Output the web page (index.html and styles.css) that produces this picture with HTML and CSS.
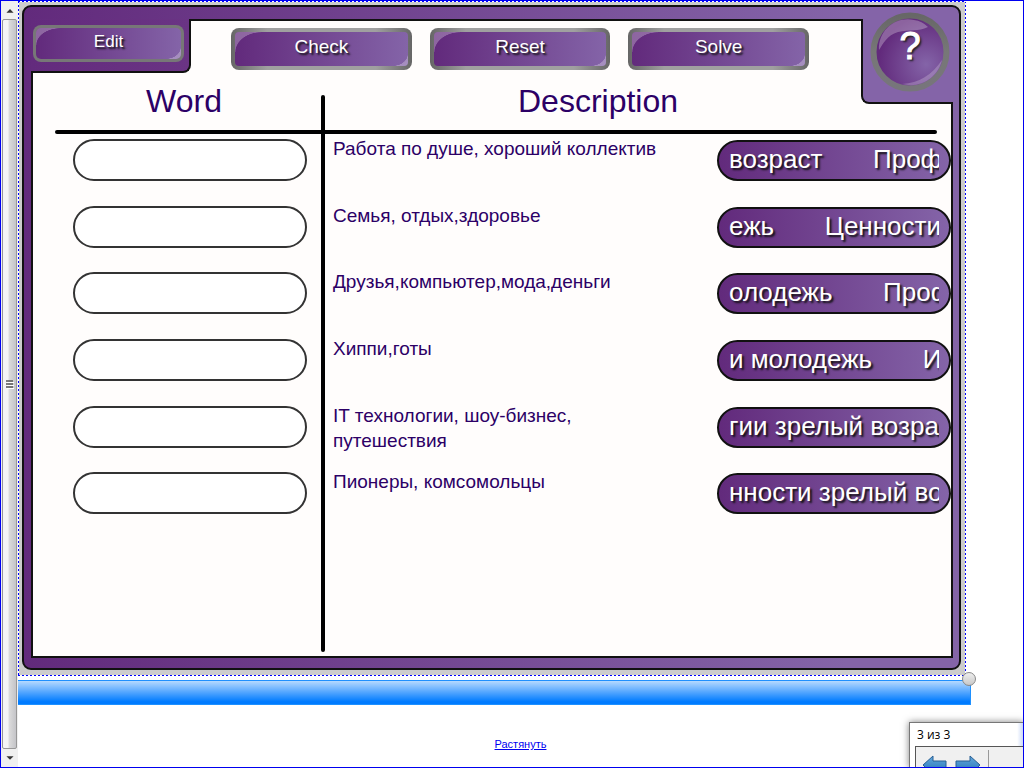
FILE: index.html
```html
<!DOCTYPE html>
<html lang="ru">
<head>
<meta charset="utf-8">
<title>Word / Description</title>
<link rel="stylesheet" href="styles.css">
</head>
<body>
<div class="app">
  <div class="scrollbar" aria-hidden="true">
    <svg class="scroll-arrow" viewBox="0 0 18 18"><path d="M5 12 9 8 13 12Z" fill="#333"/></svg>
    <div class="scroll-thumb"><svg width="8" height="9" viewBox="0 0 8 9"><path d="M0 1h7M0 4h7M0 7h7" stroke="#555" stroke-width="1.500"/><path d="M1 2.500h7M1 5.500h7M1 8.500h7" stroke="#fff" stroke-width="1"/></svg></div>
    <svg class="scroll-arrow" viewBox="0 0 18 18"><path d="M5 7h8L9 11Z" fill="#333"/></svg>
  </div>
  <main class="page">
    <section class="stage">
      <div class="frame">
        <div class="panel">
          <div class="notch-left"><button class="btn btn-edit" type="button">Edit</button></div>
          <div class="toolbar">
            <button class="btn" type="button">Check</button>
            <button class="btn" type="button">Reset</button>
            <button class="btn" type="button">Solve</button>
          </div>
          <div class="notch-right">
            <button class="help" type="button" aria-label="Help">
              <svg viewBox="0 0 80 80" aria-hidden="true">
                <defs>
                  <radialGradient id="orb" cx="0.72" cy="0.67" r="0.65"><stop offset="0" stop-color="#8464a8"/><stop offset="1" stop-color="#622a7c"/></radialGradient>
                  <linearGradient id="ring" x2="0" y2="1"><stop offset="0" stop-color="#676767"/><stop offset="0.5" stop-color="#777"/><stop offset="1" stop-color="#77757b"/></linearGradient>
                </defs>
                <circle cx="40" cy="40" r="36.500" fill="url(#orb)" stroke="url(#ring)" stroke-width="6"/>
                <path d="M9 38C8 18 26 4 44 8Q52 9 58 15C48 20 40 17 28 20C17 23 13 32 9 38Z" fill="#fff" opacity="0.270"/>
                <path d="M72 48C68 65 51 77 32 72C49 71 62 63 72 48Z" fill="#fff" opacity="0.220"/>
              </svg>
              <span class="help-mark">?</span>
            </button>
          </div>
          <div class="board">
            <h2 class="head head-word">Word</h2>
            <h2 class="head head-desc">Description</h2>
            <div class="rule-v"></div>
            <div class="rule-h"></div>
            <div class="rows">
              <div class="row"><input class="slot" type="text" aria-labelledby="d1"><p class="desc" id="d1">Работа по душе, хороший коллектив</p><button class="tile" type="button"><span class="tile-text">возраст       Проф</span></button></div>
              <div class="row"><input class="slot" type="text" aria-labelledby="d2"><p class="desc" id="d2">Семья, отдых,здоровье</p><button class="tile" type="button"><span class="tile-text">ежь       Ценности</span></button></div>
              <div class="row"><input class="slot" type="text" aria-labelledby="d3"><p class="desc" id="d3">Друзья,компьютер,мода,деньги</p><button class="tile" type="button"><span class="tile-text">олодежь       Проф</span></button></div>
              <div class="row"><input class="slot" type="text" aria-labelledby="d4"><p class="desc" id="d4">Хиппи,готы</p><button class="tile" type="button"><span class="tile-text">и молодежь       И</span></button></div>
              <div class="row"><input class="slot" type="text" aria-labelledby="d5"><p class="desc" id="d5">IT технологии, шоу-бизнес, путешествия</p><button class="tile" type="button"><span class="tile-text">гии зрелый возра</span></button></div>
              <div class="row"><input class="slot" type="text" aria-labelledby="d6"><p class="desc" id="d6">Пионеры, комсомольцы</p><button class="tile" type="button"><span class="tile-text">нности зрелый во</span></button></div>
            </div>
          </div>
        </div>
      </div>
      <span class="handle"></span>
    </section>
    <div class="bar"></div>
    <footer class="footer"><a class="stretch" href="#">Растянуть</a></footer>
  </main>
  <aside class="pager">
    <div class="pager-title">3 из 3</div>
    <div class="pager-tools">
      <button class="nav" type="button" aria-label="Назад"><svg width="26" height="22" viewBox="0 0 26 22"><defs><linearGradient id="arrow" x2="0" y2="1"><stop offset="0" stop-color="#62a8dc"/><stop offset="1" stop-color="#1f6fb2"/></linearGradient></defs><path d="M1 10 11 1V6H24V15H11V20Z" fill="url(#arrow)" stroke="#285f93"/></svg></button>
      <button class="nav" type="button" aria-label="Вперёд"><svg width="26" height="22" viewBox="0 0 26 22"><path d="M25 10 15 1V6H1V15H15V20Z" fill="url(#arrow)" stroke="#285f93"/></svg></button>
      <span class="nav-sep"></span>
    </div>
  </aside>
</div>
</body>
</html>
```
FILE: styles.css
```css
* { box-sizing: border-box; }
body {
  margin: 0;
  background: #fff;
  font-family: "Liberation Sans", Arial, sans-serif;
}
button { font-family: inherit; cursor: pointer; }

.app {
  position: relative;
  display: flex;
  height: 100vh;
  min-height: 640px;
  border: 1px solid #0000f0;
  overflow: hidden;
}

/* Scrollbar */
.scrollbar {
  display: flex;
  flex-direction: column;
  flex: none;
  width: 17px;
  padding-left: 1px;
  background: #f0f0f0;
}
.scroll-arrow { width: 16px; height: 18px; }
.scroll-thumb {
  display: flex;
  flex: 1;
  align-items: center;
  width: 15px;
  padding-left: 3px;
  border: 1px solid #979797;
  border-radius: 2px;
  background: linear-gradient(90deg, #f5f5f5 0 40%, #dcdcdc 45%, #c4c4c8);
}

/* Page column */
.page {
  display: flex;
  flex: 1;
  flex-direction: column;
  min-width: 0;
}
.stage {
  position: relative;
  display: flex;
  flex: 1;
  margin-right: 57px;
  padding: 4px 5px 6px 4px;
  background:
    repeating-linear-gradient(90deg, #00f 0 2px, #fff 2px 4px) top / 100% 1px no-repeat,
    repeating-linear-gradient(90deg, #00f 0 2px, #fff 2px 4px) bottom / 100% 1px no-repeat,
    repeating-linear-gradient(#00f 0 2px, #fff 2px 4px) left / 1px 100% no-repeat,
    repeating-linear-gradient(#00f 0 2px, #fff 2px 4px) right / 1px 100% no-repeat,
    #ccc;
}
.frame {
  display: flex;
  flex: 1;
  padding: 12px 6px 10px 7px;
  border: 2px solid #111;
  border-radius: 9px;
  background: linear-gradient(90deg, #622a7c, #8464a8 88%);
}
.panel {
  display: grid;
  flex: 1;
  grid-template-columns: 158px 1fr 90px;
  grid-template-rows: 52px 1fr;
  border: 2px solid #111;
  background: #fffdfc;
}
.notch-left {
  grid-area: 1 / 1;
  margin: -2px 0 0 -2px;
  padding: 6px 0 0 2px;
  border: solid #111;
  border-width: 0 2px 2px 0;
  border-bottom-right-radius: 8px;
  background: linear-gradient(90deg, #632b7d, #6a3484);
}
.notch-right {
  z-index: 1;
  grid-area: 1 / 3 / 3 / 4;
  align-self: start;
  height: 85px;
  margin: -2px -2px 0 0;
  border: solid #111;
  border-width: 0 0 2px 2px;
  border-bottom-left-radius: 8px;
  background: #8464a8;
}
.toolbar {
  display: flex;
  grid-area: 1 / 2;
  gap: 18px;
  padding: 7px 52px 3px 40px;
}

/* Glossy buttons */
.btn {
  position: relative;
  flex: 1;
  height: 42px;
  padding: 0 0 4px;
  border: 4px solid transparent;
  border-radius: 8px;
  background:
    radial-gradient(ellipse 26px 20px at 26px 20px, transparent 97%, rgba(255, 255, 255, 0.28) 100%) left top / 26px 20px no-repeat padding-box,
    radial-gradient(ellipse 15px 12px at 0 0, transparent 97%, rgba(255, 255, 255, 0.28) 100%) right bottom / 15px 12px no-repeat padding-box,
    linear-gradient(90deg, #622a7c, #8464a8) padding-box,
    linear-gradient(90deg, #666, #a0a0a0 20% 80%, #666) border-box;
  color: #fff;
  font-size: 19px;
  line-height: 24px;
  text-shadow: 2px 2px 2px #111;
}
.btn-edit {
  width: 151px;
  height: 37px;
  border-width: 3px;
  background:
    radial-gradient(ellipse 24px 17px at 24px 17px, transparent 97%, rgba(255, 255, 255, 0.28) 100%) left top / 24px 17px no-repeat padding-box,
    radial-gradient(ellipse 15px 12px at 0 0, transparent 97%, rgba(255, 255, 255, 0.28) 100%) right bottom / 15px 12px no-repeat padding-box,
    linear-gradient(90deg, #622a7c, #8464a8) padding-box,
    linear-gradient(#777, #777) border-box;
  font-size: 17px;
}

.help {
  display: grid;
  width: 80px;
  height: 80px;
  margin: -7px 0 0 7px;
  padding: 0;
  border: 0;
  background: none;
}
.help svg { grid-area: 1 / 1; width: 80px; height: 80px; }
.help-mark {
  z-index: 1;
  grid-area: 1 / 1;
  padding-top: 12px;
  color: #fff;
  font-size: 38px;
  line-height: 45px;
  text-shadow: 2px 2px 2px #222;
  -webkit-text-stroke: 1px #fff;
}

/* Matching board */
.board {
  display: grid;
  grid-area: 2 / 1 / 3 / 4;
  grid-template-columns: 266px 4px 1fr;
  grid-template-rows: 57px 4px 1fr;
  padding: 0 14px 4px 22px;
}
.head {
  margin: 0;
  padding-top: 9px;
  color: #2c0066;
  font-size: 32px;
  font-weight: 400;
  line-height: 38px;
  text-align: center;
}
.head-word { grid-area: 1 / 1; padding-right: 8px; }
.head-desc { grid-area: 1 / 3; padding-right: 66px; }
.rule-v {
  grid-area: 1 / 2 / 4 / 3;
  margin-top: 22px;
  border-radius: 2px;
  background: #000;
}
.rule-h {
  grid-area: 2 / 1 / 3 / 4;
  border-radius: 2px;
  background: #000;
}
.rows {
  display: grid;
  grid-area: 3 / 1 / 4 / 4;
  grid-template-rows: repeat(6, 1fr);
  height: 400px;
}
.row {
  display: grid;
  grid-template-columns: 270px 1fr 220px;
  align-items: start;
}
.slot {
  width: 234px;
  height: 42px;
  margin: 5px 0 0 18px;
  padding: 0 16px;
  border: 2px solid #333;
  border-radius: 21px;
  background: #fff;
  color: #2c0066;
  font: 19px "Liberation Sans", Arial, sans-serif;
}
.desc {
  max-width: 350px;
  margin: 2px 0 0;
  padding-left: 8px;
  color: #2c0066;
  font-size: 19px;
  line-height: 25px;
}
.row:nth-child(5) .desc { max-width: 270px; }
.tile {
  width: 234px;
  height: 41px;
  margin-top: 6px;
  padding: 0 10px 2px;
  border: 2px solid #111;
  border-radius: 21px;
  background: linear-gradient(90deg, #622a7c, #8464a8);
  color: #fff;
  font-size: 26px;
  line-height: 35px;
  text-align: left;
}
.tile-text {
  display: block;
  overflow: hidden;
  white-space: pre;
  text-shadow: 2px 2px 2px #111;
}

.handle {
  position: absolute;
  right: -10px;
  bottom: -10px;
  width: 14px;
  height: 14px;
  border: 1px solid #888;
  border-radius: 50%;
  background: linear-gradient(#eee, #c8c8c8);
}

.bar {
  height: 25px;
  margin: 4px 52px 0 0;
  border: solid #1e90ff;
  border-width: 1px 1px 1px 0;
  background: linear-gradient(#b5d9ff, #007bff 90%);
}
.footer {
  height: 62px;
  padding-top: 32px;
  font-size: 11px;
  line-height: 14px;
  text-align: center;
}
.stretch { color: #0000f0; }

/* Floating pager */
.pager {
  position: absolute;
  right: -1px;
  bottom: -1px;
  width: 115px;
  height: 46px;
  padding-left: 5px;
  border: solid #777;
  border-width: 1px 0 0 1px;
  background: linear-gradient(90deg, #fff 94%, #c3d3f5);
  box-shadow: 0 0 7px rgba(0, 0, 0, 0.5);
}
.pager-title {
  padding-left: 2px;
  color: #000;
  font: 12px/23px "Open Sans", "Noto Sans", sans-serif;
}
.pager-tools {
  display: flex;
  gap: 7px;
  height: 22px;
  padding: 8px 0 0 6px;
  border: solid #555;
  border-width: 1px 0 0 1px;
  background: #f0f0f0;
  overflow: hidden;
}
.nav {
  flex: none;
  width: 26px;
  height: 22px;
  padding: 0;
  border: 0;
  background: none;
}
.nav svg { display: block; }
.nav-sep {
  width: 1px;
  height: 22px;
  margin-top: -5px;
  background: #999;
}
```
